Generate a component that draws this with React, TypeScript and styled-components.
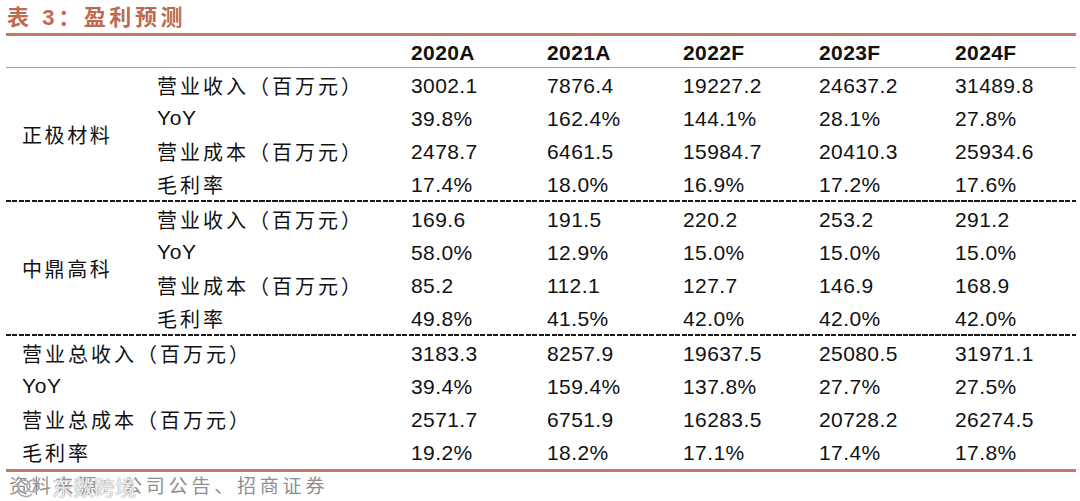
import React from 'react';
import styled, { createGlobalStyle } from 'styled-components';

const GlobalStyle = createGlobalStyle`
  html, body {
    margin: 0;
    padding: 0;
    background: #ffffff;
  }
`;

const CJK = `"Liberation Sans", "Noto Sans CJK SC", sans-serif`;

const Page = styled.div`
  width: 1080px;
  height: 501px;
  padding-left: 6px;
  box-sizing: border-box;
  overflow: hidden;
`;

const Report = styled.div`
  width: 1070px;
`;

const Title = styled.h3`
  margin: 0;
  height: 36px;
  padding: 3px 0 0 1px;
  box-sizing: border-box;
  line-height: 30px;
  font-family: ${CJK};
  font-size: 22px;
  font-weight: 700;
  letter-spacing: 3.6px;
  color: #bd6a50;
  border-bottom: 3px solid #c47a62;
`;

const Grid = styled.div`
  display: grid;
  grid-template-columns: 151px 254px repeat(4, 136px) 1fr;
  grid-auto-rows: 33px;
  align-items: center;
`;

const HeaderGrid = styled(Grid)`
  grid-auto-rows: 31px;
  border-bottom: 1px solid #c99482;
`;

// black dotted-dash rule between the company blocks
const Divider = styled.div`
  height: 2px;
  background-image: repeating-linear-gradient(
    90deg,
    #1a1a1a 0,
    #1a1a1a 5px,
    transparent 5px,
    transparent 6.5px
  );
`;

const BottomRule = styled.div`
  height: 3px;
  margin-top: 1px;
  background: #c47a62;
`;

const GroupLabel = styled.div<{ $rows: number }>`
  grid-column: 1;
  grid-row: 1 / span ${(p) => p.$rows};
  padding: 1px 0 0 16px;
  font-family: ${CJK};
  font-size: 20px;
  letter-spacing: 2.6px;
  color: #111;
`;

const RowLabel = styled.div<{ $wide?: boolean }>`
  grid-column: ${(p) => (p.$wide ? '1 / 3' : '2')};
  padding-left: ${(p) => (p.$wide ? '16px' : '0')};
  padding-top: 1px;
  font-family: ${CJK};
  font-size: 20px;
  letter-spacing: 3px;
  color: #111;
  white-space: nowrap;
`;

const Latin = styled.span`
  font-family: "Liberation Sans", Arial, sans-serif;
  font-size: 21px;
  letter-spacing: 0.6px;
`;

const Value = styled.div<{ $head?: boolean }>`
  padding-top: 3px;
  font-family: "Liberation Sans", Arial, sans-serif;
  font-size: 21px;
  letter-spacing: 0.4px;
  font-weight: ${(p) => (p.$head ? 700 : 400)};
  color: #111;
  white-space: nowrap;
`;

const Footer = styled.div`
  position: relative;
  height: 30px;
  line-height: 30px;
  padding-left: 3px;
  font-family: ${CJK};
  font-size: 19px;
  letter-spacing: 3.8px;
  color: #8f8f8f;
`;

const Watermark = styled.div`
  position: absolute;
  left: 8px;
  top: 1px;
  display: flex;
  align-items: center;
  gap: 8px;
  font-size: 21px;
  letter-spacing: 0;
  color: rgba(255, 255, 255, 0.8);
  text-shadow: 0 0 1px #a0a0a0, 0 0 1px #a0a0a0;
`;

type Row = { label: string; values: string[] };

const years = ['2020A', '2021A', '2022F', '2023F', '2024F'];

const groups: { name: string; rows: Row[] }[] = [
  {
    name: '正极材料',
    rows: [
      { label: '营业收入（百万元）', values: ['3002.1', '7876.4', '19227.2', '24637.2', '31489.8'] },
      { label: 'YoY', values: ['39.8%', '162.4%', '144.1%', '28.1%', '27.8%'] },
      { label: '营业成本（百万元）', values: ['2478.7', '6461.5', '15984.7', '20410.3', '25934.6'] },
      { label: '毛利率', values: ['17.4%', '18.0%', '16.9%', '17.2%', '17.6%'] },
    ],
  },
  {
    name: '中鼎高科',
    rows: [
      { label: '营业收入（百万元）', values: ['169.6', '191.5', '220.2', '253.2', '291.2'] },
      { label: 'YoY', values: ['58.0%', '12.9%', '15.0%', '15.0%', '15.0%'] },
      { label: '营业成本（百万元）', values: ['85.2', '112.1', '127.7', '146.9', '168.9'] },
      { label: '毛利率', values: ['49.8%', '41.5%', '42.0%', '42.0%', '42.0%'] },
    ],
  },
];

const totals: Row[] = [
  { label: '营业总收入（百万元）', values: ['3183.3', '8257.9', '19637.5', '25080.5', '31971.1'] },
  { label: 'YoY', values: ['39.4%', '159.4%', '137.8%', '27.7%', '27.5%'] },
  { label: '营业总成本（百万元）', values: ['2571.7', '6751.9', '16283.5', '20728.2', '26274.5'] },
  { label: '毛利率', values: ['19.2%', '18.2%', '17.1%', '17.4%', '17.8%'] },
];

const Label = ({ text }: { text: string }) =>
  text === 'YoY' ? <Latin>{text}</Latin> : <>{text}</>;

const DataRows = ({ rows, wide }: { rows: Row[]; wide?: boolean }) => (
  <>
    {rows.map((r) => (
      <React.Fragment key={r.label}>
        <RowLabel $wide={wide}>
          <Label text={r.label} />
        </RowLabel>
        {r.values.map((v, i) => (
          <Value key={i}>{v}</Value>
        ))}
      </React.Fragment>
    ))}
  </>
);

const LogoMark = () => (
  <svg width="30" height="22" viewBox="0 0 30 22" fill="none">
    <circle cx="10" cy="9" r="6" stroke="#a8a8a8" strokeWidth="1.6" />
    <circle cx="19" cy="9" r="6" stroke="#a8a8a8" strokeWidth="1.6" />
    <path d="M4 14 C6 20 14 21 18 17" stroke="#a8a8a8" strokeWidth="1.6" />
  </svg>
);

const App = () => (
  <Page>
    <GlobalStyle />
    <Report>
      <Title>表 3：盈利预测</Title>
      <HeaderGrid>
        <span />
        <span />
        {years.map((y) => (
          <Value $head key={y}>
            {y}
          </Value>
        ))}
      </HeaderGrid>
      {groups.map((g) => (
        <React.Fragment key={g.name}>
          <Grid>
            <GroupLabel $rows={g.rows.length}>{g.name}</GroupLabel>
            <DataRows rows={g.rows} />
          </Grid>
          <Divider />
        </React.Fragment>
      ))}
      <Grid>
        <DataRows rows={totals} wide />
      </Grid>
      <BottomRule />
      <Footer>
        资料来源：公司公告、招商证券
        <Watermark>
          <LogoMark />
          东数跨境
        </Watermark>
      </Footer>
    </Report>
  </Page>
);

export default App;
